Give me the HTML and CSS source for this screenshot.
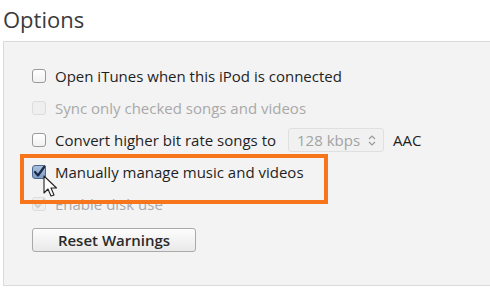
FILE: index.html
```html
<!DOCTYPE html>
<html>
<head>
<meta charset="utf-8">
<link rel="stylesheet" href="styles.css">
</head>
<body>
<h1 class="title">Options</h1>
<div class="panel">
  <div class="row">
    <span class="box"></span>
    <span class="label">Open iTunes when this iPod is connected</span>
  </div>
  <div class="row disabled">
    <span class="box box-disabled"></span>
    <span class="label">Sync only checked songs and videos</span>
  </div>
  <div class="row">
    <span class="box"></span>
    <span class="label">Convert higher bit rate songs to</span>
    <span class="select">128 kbps
      <svg class="chev" width="8" height="11" viewBox="0 0 8 11"><path d="M1 4 L4 1 L7 4 M1 7 L4 10 L7 7" fill="none" stroke="#9a9a9a" stroke-width="1.2"/></svg>
    </span>
    <span class="label aac">AAC</span>
  </div>
  <div class="row highlight-row">
    <span class="box box-checked">
      <svg width="14" height="14" viewBox="0 0 14 14"><path d="M3 7 L6 10.5 L12.5 1.5" fill="none" stroke="#1b2a44" stroke-width="2.2" stroke-linecap="round" stroke-linejoin="round"/></svg>
    </span>
    <span class="label">Manually manage music and videos</span>
    <div class="highlight"></div>
    <svg class="cursor" width="16" height="24" viewBox="0 0 16 24"><path d="M1 1 L1 18 L5 14 L8 21 L11 20 L8 13 L13.5 13 Z" fill="#fff" stroke="#222" stroke-width="1.1" stroke-linejoin="round"/></svg>
  </div>
  <div class="row disabled">
    <span class="box box-disabled">
      <svg width="14" height="14" viewBox="0 0 14 14"><path d="M3 7 L6 10.5 L12 2" fill="none" stroke="#cfcfcf" stroke-width="2" stroke-linecap="round" stroke-linejoin="round"/></svg>
    </span>
    <span class="label">Enable disk use</span>
  </div>
  <button class="btn">Reset Warnings</button>
</div>
</body>
</html>
```
FILE: styles.css
```css
html, body {
  margin: 0;
  padding: 0;
  background: #ffffff;
  overflow: hidden;
  width: 490px;
  height: 296px;
}
body {
  font-family: "Open Sans", "Noto Sans", sans-serif;
}
.title {
  margin: 0;
  padding: 5px 0 0 3px;
  height: 36px;
  font-size: 22px;
  font-weight: 400;
  color: #3a3a3a;
  line-height: 28px;
}
.panel {
  margin-left: 3px;
  width: 487px;
  height: 245px;
  background: #f3f3f3;
  border: 1px solid #dadada;
  border-right: none;
  box-sizing: border-box;
  padding: 18px 0 0 28px;
}
.row {
  position: relative;
  display: flex;
  align-items: center;
  height: 32px;
  font-size: 15px;
  font-weight: 500;
  color: #1f1f1f;
}
.row.disabled {
  color: #a9a9a9;
  font-weight: 400;
}
.box {
  width: 14px;
  height: 14px;
  box-sizing: border-box;
  border: 1px solid #9a9a9a;
  border-radius: 3px;
  background: linear-gradient(#ffffff, #f1f1f1);
  margin-right: 9px;
  flex: none;
  display: flex;
}
.box svg { display: block; margin: -1px; }
.box-disabled {
  border-color: #dcdcdc;
  background: #efefef;
}
.box-checked {
  border-color: #4a6890;
  background: linear-gradient(#a9c0dc, #7f9ec6);
}
.select {
  display: inline-flex;
  align-items: center;
  justify-content: space-between;
  width: 96px;
  height: 24px;
  box-sizing: border-box;
  margin-left: 12px;
  padding: 0 7px 0 8px;
  border: 1px solid #e0e0e0;
  border-radius: 3px;
  background: #f1f1f1;
  color: #a3a3a3;
  font-weight: 400;
}
.aac {
  margin-left: 9px;
}
.highlight {
  position: absolute;
  left: -12px;
  top: -2px;
  width: 308px;
  height: 50px;
  box-sizing: border-box;
  border: 4px solid #f7761c;
  z-index: 2;
}
.cursor {
  position: absolute;
  left: 11px;
  top: 19px;
  z-index: 3;
}
.btn {
  display: block;
  margin-top: 8px;
  width: 164px;
  height: 24px;
  border: 1px solid #a9a9a9;
  border-radius: 3px;
  background: linear-gradient(#fdfdfd, #e9e9e9);
  font-family: "Open Sans", "Noto Sans", sans-serif;
  font-size: 15px;
  font-weight: 600;
  color: #2a2a2a;
  padding: 0;
}
```
